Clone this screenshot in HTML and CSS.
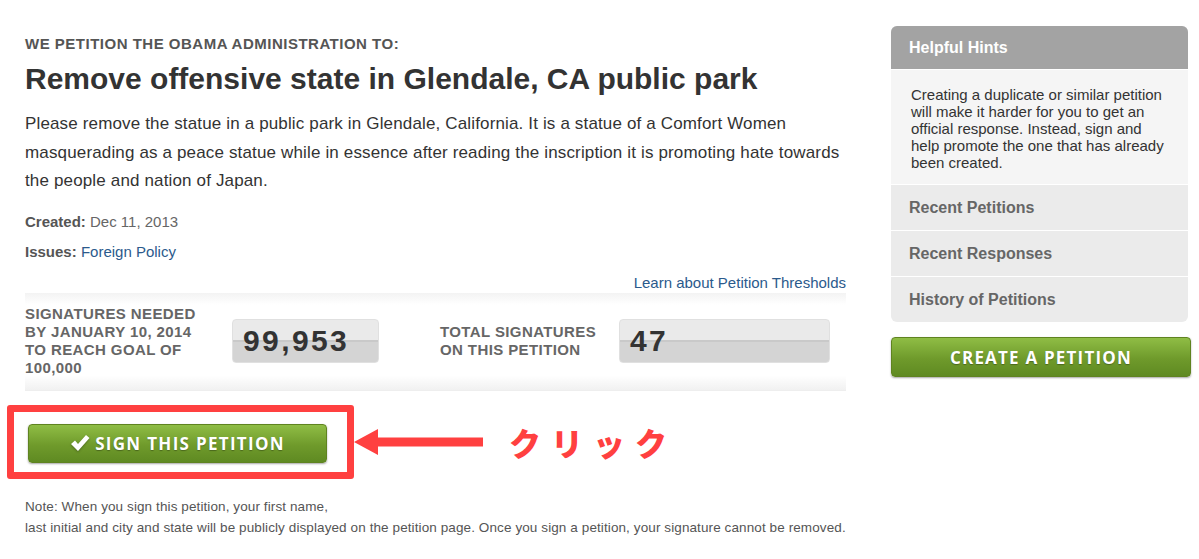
FILE: index.html
```html
<!DOCTYPE html>
<html lang="en">
<head>
<meta charset="UTF-8" />
<title>Petition</title>
<link rel="stylesheet" href="styles.css">
</head>
<body>
<div class="page">
  <main class="petition">
    <h4 class="eyebrow">We petition the Obama Administration to:</h4>
    <h1 class="title">Remove offensive state in Glendale, CA public park</h1>
    <p class="body-text">Please remove the statue in a public park in Glendale, California. It is a statue of a Comfort Women masquerading as a peace statue while in essence after reading the inscription it is promoting hate towards the people and nation of Japan.</p>
    <div class="meta"><b>Created:</b> Dec 11, 2013</div>
    <div class="meta"><b>Issues:</b> <a href="#">Foreign Policy</a></div>
    <div class="thresholds"><a href="#">Learn about Petition Thresholds</a></div>

    <div class="sig-box">
      <div class="sig-label needed">Signatures needed by January 10, 2014 to reach goal of 100,000</div>
      <div class="counter small">99,953</div>
      <div class="sig-label total">Total signatures on this petition</div>
      <div class="counter wide">47</div>
    </div>

    <div class="sign-row">
      <div class="highlight">
        <button class="btn-sign">
          <svg class="check" width="20" height="18" viewBox="0 0 20 18">
            <path d="M1 10 L5 6.5 L8 10 L16 1 L19.5 4 L8 17 Z" fill="#fff"/>
          </svg>
          SIGN THIS PETITION
        </button>
      </div>
      <div class="arrow">
        <svg width="130" height="28" viewBox="0 0 130 28">
          <polygon points="0,14 24,1 24,9.5 129,9.5 129,18.5 24,18.5 24,27" fill="#ff4040"/>
        </svg>
      </div>
      <div class="click">クリック</div>
    </div>

    <p class="note">Note: When you sign this petition, your first name,<br>last initial and city and state will be publicly displayed on the petition page. Once you sign a petition, your signature cannot be removed.</p>
  </main>

  <aside class="sidebar">
    <div class="panel">
      <div class="panel-head">Helpful Hints</div>
      <div class="panel-hint">Creating a duplicate or similar petition will make it harder for you to get an official response. Instead, sign and help promote the one that has already been created.</div>
      <div class="panel-item">Recent Petitions</div>
      <div class="panel-item">Recent Responses</div>
      <div class="panel-item">History of Petitions</div>
    </div>
    <button class="btn-create">CREATE A PETITION</button>
  </aside>
</div>
</body>
</html>
```

FILE: styles.css
```css
body {
  margin: 0;
  background: #fff;
  font-family: "Liberation Sans", Arial, sans-serif;
  color: #333;
}
.page {
  display: flex;
  gap: 45px;
  padding: 26px 0 0 25px;
}
.petition {
  width: 821px;
}
.eyebrow {
  margin: 9px 0 0;
  font-size: 15px;
  letter-spacing: 0.5px;
  text-transform: uppercase;
  color: #555;
  line-height: 17px;
}
.title {
  margin: 9px 0 0;
  font-size: 30px;
  line-height: 36px;
  color: #333;
}
.body-text {
  margin: 13px 0 0;
  font-size: 17px;
  letter-spacing: 0.15px;
  line-height: 28.5px;
  color: #333;
}
.meta {
  margin-top: 17px;
  font-size: 15px;
  line-height: 17px;
  color: #666;
}
.meta + .meta {
  margin-top: 13px;
}
.meta b {
  color: #555;
}
a {
  color: #2b5a8c;
  text-decoration: none;
}
.thresholds {
  margin-top: 14px;
  text-align: right;
  font-size: 15px;
  line-height: 17px;
}
.sig-box {
  margin-top: 2px;
  height: 97px;
  display: flex;
  align-items: center;
  background: linear-gradient(#f3f3f3, #fff 12%, #fff 85%, #f1f1f1);
  border-bottom: 1px solid #eee;
}
.sig-label {
  font-size: 15px;
  font-weight: bold;
  line-height: 18px;
  text-transform: uppercase;
  color: #666;
  letter-spacing: 0.4px;
}
.needed {
  width: 190px;
  margin-right: 17px;
}
.total {
  width: 170px;
  margin-left: 61px;
  margin-right: 9px;
}
.counter {
  height: 44px;
  box-sizing: border-box;
  border-radius: 4px;
  background: linear-gradient(#eaeaea 0, #eaeaea 48%, #c9c9c9 48%, #c9c9c9 52%, #d4d4d4 52%);
  border: 1px solid #e0e0e0;
  font-size: 30px;
  font-weight: bold;
  letter-spacing: 2.4px;
  color: #333;
  line-height: 42px;
  padding-left: 10px;
}
.counter.small {
  width: 147px;
}
.counter.wide {
  width: 211px;
}
.sign-row {
  display: flex;
  align-items: center;
  margin-top: 14px;
  margin-left: -18px;
}
.highlight {
  border: 7px solid #ff4040;
  border-radius: 3px;
  padding: 12px 20px 9px 14px;
}
.btn-sign,
.btn-create {
  border-radius: 4px;
  background: linear-gradient(#8fbd45, #6f9a2b 55%, #5f8a22);
  border: 1px solid #5f8320;
  color: #fff;
  font-family: "Open Sans", sans-serif;
  font-weight: bold;
  cursor: pointer;
  box-shadow: 0 1px 2px rgba(0, 0, 0, 0.35);
  text-shadow: 0 1px 1px rgba(0, 0, 0, 0.3);
}
.btn-sign {
  width: 299px;
  height: 39px;
  font-size: 17px;
  letter-spacing: 1.3px;
  display: flex;
  align-items: center;
  justify-content: center;
  gap: 5px;
}
.check {
  filter: drop-shadow(0 1px 1px rgba(0, 0, 0, 0.3));
}
.arrow {
  height: 28px;
}
.click {
  margin-left: 25px;
  font-family: "Noto Sans CJK JP", sans-serif;
  font-weight: 900;
  font-size: 32px;
  letter-spacing: 10px;
  color: #ff4040;
  line-height: 40px;
}
.note {
  margin: 17px 0 0;
  font-size: 13.5px;
  letter-spacing: 0.1px;
  line-height: 21px;
  color: #555;
  white-space: nowrap;
}
.sidebar {
  width: 299px;
}
.panel {
  width: 297px;
  border-radius: 6px;
  overflow: hidden;
  background: #ebebeb;
}
.panel-head {
  background: #a3a3a3;
  color: #fff;
  font-weight: bold;
  font-size: 16px;
  height: 43px;
  line-height: 43px;
  padding-left: 18px;
  border-bottom: 1px solid #fff;
}
.panel-hint {
  background: #f5f5f5;
  font-size: 15px;
  line-height: 17px;
  color: #333;
  padding: 16px 20px 13px;
  border-bottom: 1px solid #fff;
}
.panel-item {
  height: 45px;
  line-height: 45px;
  padding-left: 18px;
  font-weight: bold;
  font-size: 16px;
  color: #666;
  border-top: 1px solid #fff;
}
.panel-hint + .panel-item {
  border-top: none;
}
.btn-create {
  margin-top: 15px;
  width: 300px;
  height: 40px;
  font-size: 17px;
  letter-spacing: 1.2px;
}
```
